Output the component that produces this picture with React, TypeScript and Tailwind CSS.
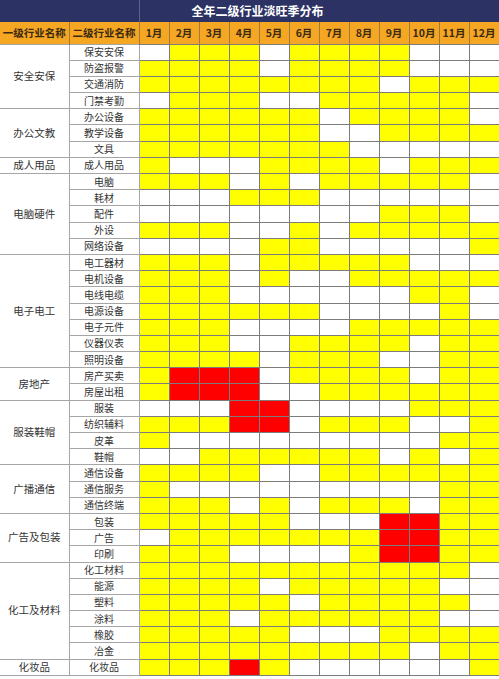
import React from "react";

type Group = {
  name: string;
  items: { name: string; months: string }[];
};

// Y = 旺季(黄), W = 淡季(白), R = 高峰(红)
const groups: Group[] = [
  {
    name: "安全安保",
    items: [
      { name: "保安安保", months: "WYYYWYYYYWWW" },
      { name: "防盗报警", months: "YYYYWYYYYWWW" },
      { name: "交通消防", months: "YYYYYYYYWYYY" },
      { name: "门禁考勤", months: "WYYYWWYYYYYW" },
    ],
  },
  {
    name: "办公文教",
    items: [
      { name: "办公设备", months: "YYYYYYWYYYYW" },
      { name: "教学设备", months: "YYYYYYWWYYYY" },
      { name: "文具", months: "YYYYYYYWWWWW" },
    ],
  },
  {
    name: "成人用品",
    items: [{ name: "成人用品", months: "YWWWYYYYWYYY" }],
  },
  {
    name: "电脑硬件",
    items: [
      { name: "电脑", months: "YYYWYWYYYYYW" },
      { name: "耗材", months: "WWWYYYWWWWWW" },
      { name: "配件", months: "WWWWWWWWYYYW" },
      { name: "外设", months: "YYYWWYWYYYYY" },
      { name: "网络设备", months: "WWWWYYWWWWWY" },
    ],
  },
  {
    name: "电子电工",
    items: [
      { name: "电工器材", months: "YYYWYYYYYWWW" },
      { name: "电机设备", months: "YYYWYWWYYYYY" },
      { name: "电线电缆", months: "YYYWWWWWWYYW" },
      { name: "电源设备", months: "YYYYYYWWWWYW" },
      { name: "电子元件", months: "YYYWWWWYYYYY" },
      { name: "仪器仪表", months: "YYYWWYYYYWYY" },
      { name: "照明设备", months: "YYYYWYYYWWYY" },
    ],
  },
  {
    name: "房地产",
    items: [
      { name: "房产买卖", months: "YRRRWYYYYWYY" },
      { name: "房屋出租", months: "YRRRWWYYYYYY" },
    ],
  },
  {
    name: "服装鞋帽",
    items: [
      { name: "服装", months: "WWWRRWWWWYYY" },
      { name: "纺织辅料", months: "YYYRRWYYYWWY" },
      { name: "皮革", months: "YWWWWWWWWWYY" },
      { name: "鞋帽", months: "WWYYYYYYWYWY" },
    ],
  },
  {
    name: "广播通信",
    items: [
      { name: "通信设备", months: "YYYYWWYYYYYY" },
      { name: "通信服务", months: "YWWWWWWWWWYY" },
      { name: "通信终端", months: "YYYWYWYYYWYY" },
    ],
  },
  {
    name: "广告及包装",
    items: [
      { name: "包装", months: "YYYYYWWWRRYY" },
      { name: "广告", months: "WYYYYYYYRRYY" },
      { name: "印刷", months: "YYYWWWWYRRYY" },
    ],
  },
  {
    name: "化工及材料",
    items: [
      { name: "化工材料", months: "YYYYYYYYYYYW" },
      { name: "能源", months: "YYYYWYYYYYWW" },
      { name: "塑料", months: "YYYYYWYYYYYW" },
      { name: "涂料", months: "YYYWYYYYYYWW" },
      { name: "橡胶", months: "YYYYYWWWYYYY" },
      { name: "冶金", months: "YYYYYYYYYWYY" },
    ],
  },
  {
    name: "化妆品",
    items: [{ name: "化妆品", months: "YYYRYWWWWWWY" }],
  },
];

const monthLabels = ["1月", "2月", "3月", "4月", "5月", "6月", "7月", "8月", "9月", "10月", "11月", "12月"];

const cellColor: Record<string, string> = {
  Y: "bg-[#ffff00]",
  W: "bg-white",
  R: "bg-[#ff0000]",
};

const App: React.FC = () => {
  return (
    <div className="w-[499px] h-[679px] overflow-hidden bg-white font-['Noto_Sans_CJK_SC','Noto_Sans',sans-serif]">
      <table className="w-[499px] table-fixed border-collapse">
        <colgroup>
          <col className="w-[69px]" />
          <col className="w-[70px]" />
          {monthLabels.map((m) => (
            <col key={m} className="w-[30px]" />
          ))}
        </colgroup>
        <thead>
          <tr className="h-[22px]">
            <td colSpan={2} className="bg-[#2c3263] border-r border-[#5a6090] p-0" />
            <td
              colSpan={12}
              className="bg-[#2c3263] p-0 pl-[52px] text-left text-[12px] font-bold leading-none text-white"
            >
              全年二级行业淡旺季分布
            </td>
          </tr>
          <tr className="h-[22px] bg-[#f5a623] text-[#3b2a12]">
            <td className="border-r border-[#9c7a3c] p-0 text-center text-[10.5px] font-bold leading-none whitespace-nowrap">
              一级行业名称
            </td>
            <td className="border-r border-[#9c7a3c] p-0 text-center text-[10.5px] font-bold leading-none whitespace-nowrap">
              二级行业名称
            </td>
            {monthLabels.map((m) => (
              <td
                key={m}
                className="border-r border-[#9c7a3c] p-0 text-center text-[10.5px] font-bold leading-none whitespace-nowrap"
              >
                {m}
              </td>
            ))}
          </tr>
        </thead>
        <tbody>
          {groups.map((group) =>
            group.items.map((item, idx) => (
              <tr key={group.name + item.name} className="h-[16.2px]">
                {idx === 0 && (
                  <td
                    rowSpan={group.items.length}
                    className="border border-[#a6a6a6] border-l-0 bg-white p-0 text-center text-[10.5px] leading-none text-[#333] whitespace-nowrap"
                  >
                    {group.name}
                  </td>
                )}
                <td className="border border-[#a6a6a6] bg-white p-0 text-center text-[10px] leading-none text-[#333] whitespace-nowrap">
                  {item.name}
                </td>
                {item.months.split("").map((c, i) => (
                  <td key={i} className={`border border-[#7c7c7c] p-0 ${cellColor[c]}`} />
                ))}
              </tr>
            ))
          )}
        </tbody>
      </table>
    </div>
  );
};

export default App;
